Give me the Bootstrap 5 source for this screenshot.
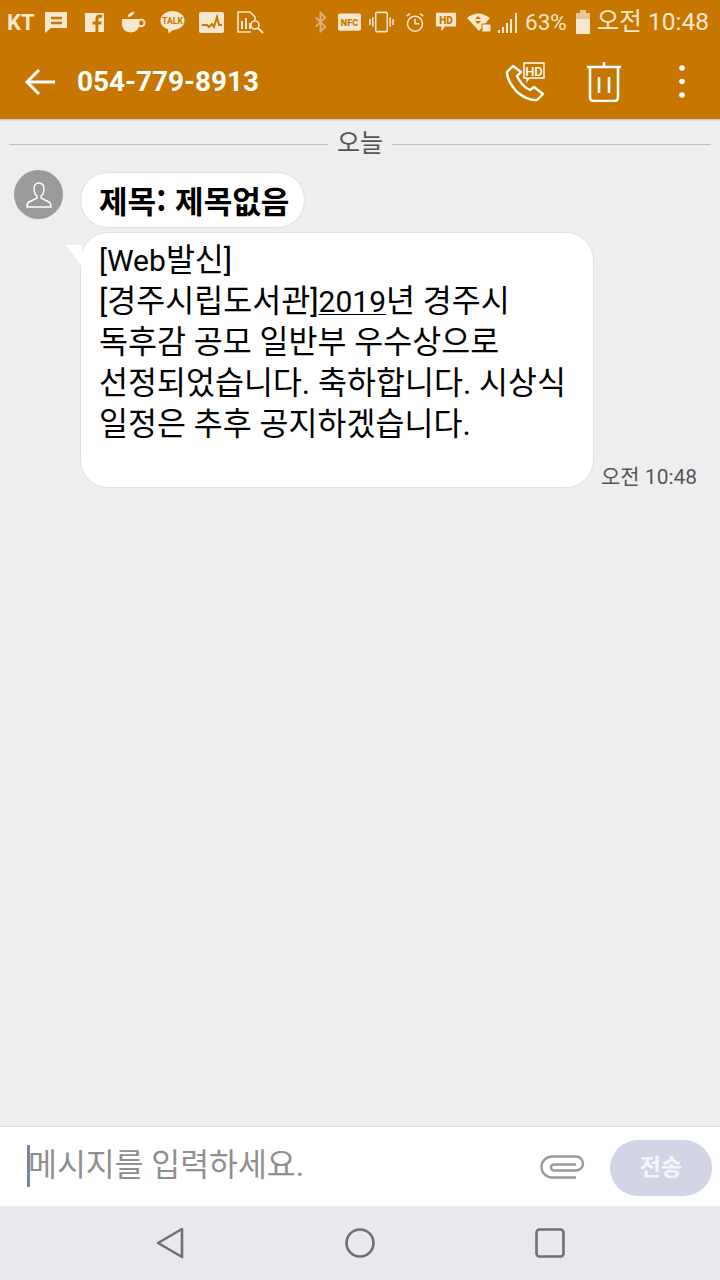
<!DOCTYPE html>
<html lang="ko">
<head>
<meta charset="UTF-8">
<meta name="viewport" content="width=device-width, initial-scale=1.0">
<title>메시지</title>
<link rel="stylesheet" href="https://cdn.jsdelivr.net/npm/bootstrap@5.3.0/dist/css/bootstrap.min.css">
<style>
body { width:720px; height:1280px; overflow:hidden; background:#eee; font-family:Roboto,"Noto Sans CJK KR",sans-serif; }
.app { height:1280px; }
.top-area { background:#c77700; color:#fff; box-shadow:0 1px 2px rgba(0,0,0,.2); }
.status-row { height:44px; padding:0 11px 0 7px; color:#f8e7cf; }
.carrier { font-size:22px; font-weight:700; margin-right:9px; }
.status-pct { font-size:22.5px; line-height:1; margin-left:7px; white-space:nowrap; }
.status-time { font-size:24.5px; line-height:1; margin-left:7px; white-space:nowrap; }
.ico-f { margin-left:16px; }
.ico-cup { margin-left:16px; }
.ico-talk { margin-left:14px; }
.ico-pulse { margin-left:14px; }
.ico-search { margin-left:13px; }
.ico-nfc { margin-left:11px; }
.ico-vib { margin-left:8px; }
.ico-alarm { margin-left:11px; }
.ico-hd { margin-left:10px; }
.ico-wifi { margin-left:10px; }
.ico-sig { margin-left:6px; }
.ico-batt { margin-left:9px; }
.tool-row { height:75px; padding:0 35px 0 24px; }
.phone-no { font-size:27.9px; font-weight:700; margin-left:21px; padding-top:1px; }
.ico-trash { margin-left:42px; }
.ico-dots { margin-left:58px; }
.chat-area { padding:0 9px 0 14px; }
.day-line { height:50px; margin-left:-5px; color:#555; font-size:25px; }
.day-line::before, .day-line::after { content:""; flex:1; height:1px; background:#bdbdbd; }
.day-line span { padding:0 9px; }
.avatar-dot { width:49px; height:49px; background:#9a9a9a; margin-top:1px; }
.msg-col { margin-left:17px; }
.bubble-title { height:56px; margin-top:3px; padding:0 15px 0 18px; background:#fff; border:1px solid #e0e0e0; border-radius:28px; font-family:"Noto Sans CJK KR",sans-serif; font-size:31.1px; font-weight:700; color:#000; white-space:nowrap; }
.bubble-body { position:relative; width:514px; height:256px; margin-top:4px; padding:7px 18px; background:#fff; border:1px solid #e0e0e0; border-radius:28px; font-size:31.5px; line-height:41px; color:#000; white-space:nowrap; }
.bubble-tail { position:absolute; left:-15px; top:12px; }
.latin-run { font-size:30px; }
.time-label { font-size:21px; color:#555; margin-left:7px; margin-bottom:-5px; white-space:nowrap; }
.link-word { text-decoration:underline; text-underline-offset:2px; text-decoration-thickness:1px; }
.input-row { height:80px; background:#fff; border-top:1px solid #ddd; padding:0 8px 0 27px; }
.caret-bar { width:3px; height:42px; background:#7583ad; margin-right:-2px; margin-bottom:2px; }
.input-hint { font-size:31.4px; color:#8f8f8f; white-space:nowrap; margin-bottom:2px; }
.send-pill { width:102px; height:56px; margin-top:3px; border-radius:28px; background:#d2d5e6; color:#f5f6fa; font-size:23px; font-weight:700; border:0; padding:0; margin-left:24px; }
.nav-row { height:74px; background:#e8e9ed; }
.nav-cell { width:190px; }
</style>
</head>
<body>
<div class="app d-flex flex-column">
  <div class="top-area">
    <div class="status-row d-flex align-items-center">
      <span class="carrier">KT</span>
      <svg width="24" height="24" viewBox="0 0 24 24"><path fill="#f8e7cf" d="M1 2h22v16H7l-6 5z"/><path stroke="#c77700" stroke-width="2.4" d="M7 8h11M7 13h11"/></svg>
      <svg class="ico-f" width="21" height="21" viewBox="0 0 22 22"><path fill="#f8e7cf" d="M1 1h20v20H15v-8h3l.5-3H15V8q0-2 2-2h2V3h-3q-4 0-4 4v3h-3v3h3v8H1z"/></svg>
      <svg class="ico-cup" width="25" height="24" viewBox="0 0 26 24"><path fill="#f8e7cf" d="M1 9h18v5q0 8-9 9-9-1-9-9zM7 7q0-5 7-6-1 5-7 6z"/><circle cx="21" cy="13" r="3.5" fill="none" stroke="#f8e7cf" stroke-width="2"/></svg>
      <svg class="ico-talk" width="25" height="24" viewBox="0 0 26 24"><ellipse cx="13" cy="10.5" rx="12.5" ry="10" fill="#f8e7cf"/><path fill="#f8e7cf" d="M8 18l1 6 6-5z"/><text x="13" y="14" font-size="9" font-weight="700" text-anchor="middle" fill="#c77700" font-family="Roboto">TALK</text></svg>
      <svg class="ico-pulse" width="25" height="21" viewBox="0 0 25 21"><rect width="25" height="21" rx="2" fill="#f8e7cf"/><path fill="none" stroke="#c77700" stroke-width="2" d="M3 13h5l2 2 3-3 2 3 3-10 2 8h3"/></svg>
      <svg class="ico-search" width="27" height="23" viewBox="0 0 27 23" fill="none" stroke="#f8e7cf" stroke-width="1.6"><path d="M14 21H1V1h12l5 5v3"/><path stroke-width="2" d="M5 18V10M9 18V7M13 18v-6"/><circle cx="18" cy="14" r="4"/><path stroke-width="2" d="M21 17l5 5"/></svg>
      <div class="flex-grow-1"></div>
      <svg width="13" height="22" viewBox="0 0 14 22" fill="none" stroke="#e0b27a" stroke-width="2"><path d="M2 6l10 10-5 5V1l5 5L2 16"/></svg>
      <svg class="ico-nfc" width="23" height="18" viewBox="0 0 24 18"><rect width="24" height="18" rx="2" fill="#f8e7cf"/><text x="12" y="13.500" font-size="9.5" font-weight="900" text-anchor="middle" fill="#c77700" font-family="Roboto">NFC</text></svg>
      <svg class="ico-vib" width="25" height="22" viewBox="0 0 26 22" fill="none" stroke="#f8e7cf" stroke-width="1.6"><rect x="7" y="1" width="12" height="20" rx="1.5"/><path d="M4 6v10M1 8v6M22 6v10M25 8v6"/></svg>
      <svg class="ico-alarm" width="20" height="22" viewBox="0 0 24 24" fill="none" stroke="#f8e7cf" stroke-width="1.8"><circle cx="12" cy="14" r="9"/><path d="M12 8v6h5M2 5l4-3M22 5l-4-3"/></svg>
      <svg class="ico-hd" width="22" height="22" viewBox="0 0 24 22"><path fill="#f8e7cf" d="M1 1h22v15H11l-4 5v-5H1z"/><text x="12" y="13" font-size="11" font-weight="900" text-anchor="middle" fill="#c77700" font-family="Roboto">HD</text></svg>
      <svg class="ico-wifi" width="24" height="20" viewBox="0 0 24 20"><path fill="#f8e7cf" d="M0 6Q11-3 23 6L12 19z"/><path fill="#c77700" d="M11 4l3 3H8zM11 12l3-3H8z"/><rect x="15" y="12" width="9" height="8" fill="#f8e7cf" stroke="#c77700"/></svg>
      <svg class="ico-sig" width="21" height="21" viewBox="0 0 21 21" fill="#f8e7cf"><path d="M1 18h2v3H1zM5 15h2v6H5zM9 11h2v10H9zM13 7h2v14h-2zM18 1h2v20h-2z"/></svg>
      <span class="status-pct">63%</span>
      <svg class="ico-batt" width="14" height="24" viewBox="0 0 14 24"><path fill="#e9c596" d="M4 0h6v3h4v8H0V3h4z"/><path fill="#f8e7cf" d="M0 9h14v15H0z"/></svg>
      <span class="status-time">오전 10:48</span>
    </div>
    <div class="tool-row d-flex align-items-center">
      <svg width="32" height="28" viewBox="0 0 32 28" fill="none" stroke="#fff" stroke-width="3"><path d="M31 14H3M15 2L3 14l12 12"/></svg>
      <span class="phone-no flex-grow-1">054-779-8913</span>
      <svg width="40" height="40" viewBox="0 0 40 40" fill="none" stroke="#fff" stroke-width="2.4"><path d="M8 4L2 10q0 9 10 20 11 9 20 8l6-6-9-7-4 3q-5-2-8-6t-5-8l4-4z" stroke-linejoin="round"/><path fill="#c77700" stroke-width="1.4" d="M19 1h20v15H24l-2 3v-3h-3z"/><text x="29" y="13.500" font-size="13" font-weight="500" stroke="none" text-anchor="middle" fill="#fff" font-family="Roboto">HD</text></svg>
      <svg class="ico-trash" width="34" height="40" viewBox="0 0 34 40" fill="none" stroke="#fff" stroke-width="2.6"><path d="M0 5h34M17 0v5M3 5v30q0 4 4 4h20q4 0 4-4V5M12 15v16M22 15v16"/></svg>
      <svg class="ico-dots" width="6" height="33" viewBox="0 0 6 33" fill="#fff"><circle cx="3" cy="3" r="2.800"/><circle cx="3" cy="16.500" r="2.800"/><circle cx="3" cy="30" r="2.800"/></svg>
    </div>
  </div>

  <div class="chat-area flex-grow-1">
    <div class="day-line d-flex align-items-center"><span>오늘</span></div>
    <div class="d-flex">
      <div class="avatar-dot rounded-circle d-flex align-items-center justify-content-center flex-shrink-0">
        <svg width="26" height="26" viewBox="0 0 26 26" fill="none" stroke="#fff" stroke-width="1.4"><path d="M13 1c-3.500 0-5 3-5 6s1.500 6 3 7v2l-8 4q-2 1-2 5h24q0-4-2-5l-8-4v-2c1.500-1 3-4 3-7s-1.500-6-5-6z"/></svg>
      </div>
      <div class="msg-col d-flex flex-column align-items-start">
        <div class="bubble-title d-flex align-items-center">제목: 제목없음</div>
        <div class="d-flex align-items-end">
          <div class="bubble-body">
            <svg class="bubble-tail" width="16" height="22" viewBox="0 0 16 22"><path fill="#fff" d="M0 0h16v22z"/></svg>
            <span class="latin-run">[Web</span>발신]<br>[경주시립도서관]<span class="link-word latin-run">2019</span>년 경주시<br>독후감 공모 일반부 우수상으로<br>선정되었습니다. 축하합니다. 시상식<br>일정은 추후 공지하겠습니다.
          </div>
          <span class="time-label">오전 10:48</span>
        </div>
      </div>
    </div>
  </div>

  <div class="input-row d-flex align-items-center">
    <div class="caret-bar"></div>
    <span class="input-hint flex-grow-1">메시지를 입력하세요.</span>
    <svg width="46" height="24" viewBox="0 0 46 24" fill="none" stroke="#999" stroke-width="2.400"><path d="M36 22.500H12a10.500 10.500 0 0 1 0-21H36a7 7 0 0 1 0 14H14a3 3 0 0 1 0-6H36"/></svg>
    <button class="send-pill" type="button">전송</button>
  </div>
  <div class="nav-row d-flex align-items-center justify-content-center">
    <div class="nav-cell d-flex justify-content-center"><svg width="28" height="32" viewBox="0 0 28 32" fill="none" stroke="#707070" stroke-width="2.600" stroke-linejoin="round"><path d="M26 2L2 16l24 14z"/></svg></div>
    <div class="nav-cell d-flex justify-content-center"><svg width="30" height="30" viewBox="0 0 30 30" fill="none" stroke="#707070" stroke-width="2.600"><circle cx="15" cy="15" r="13.500"/></svg></div>
    <div class="nav-cell d-flex justify-content-center"><svg width="30" height="30" viewBox="0 0 30 30" fill="none" stroke="#707070" stroke-width="2.600"><rect x="1.500" y="1.500" width="27" height="27" rx="3"/></svg></div>
  </div>
</div>
<script src="https://cdn.jsdelivr.net/npm/bootstrap@5.3.0/dist/js/bootstrap.bundle.min.js"></script>
</body>
</html>
